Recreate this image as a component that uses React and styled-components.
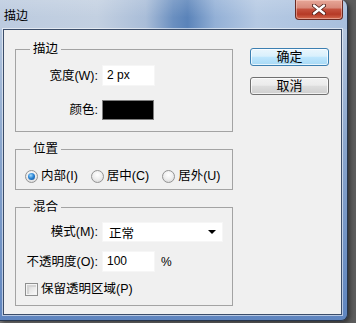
import React from 'react';
import styled, { createGlobalStyle } from 'styled-components';

const Global = createGlobalStyle`
  html, body { margin: 0; padding: 0; }
  body {
    width: 356px; height: 323px; overflow: hidden;
    background: linear-gradient(90deg, #7a7a7a, #5c5c5c);
    font-family: "Liberation Sans", "Noto Sans CJK SC", sans-serif;
    color: #000;
  }
`;

const Window = styled.div`
  width: 348px;
  height: 321px;
  box-sizing: border-box;
  display: flex;
  flex-direction: column;
  border-radius: 0 7px 7px 0;
  border-right: 1px solid #27364d;
  border-bottom: 1px solid #27364d;
  overflow: hidden;
  box-shadow: 2px 2px 4px rgba(0, 0, 0, 0.45);
`;

const TitleBar = styled.div`
  height: 29px;
  flex: none;
  display: flex;
  align-items: flex-start;
  justify-content: space-between;
  background:
    linear-gradient(180deg, rgba(255,255,255,0.15) 0%, rgba(255,255,255,0) 60%),
    linear-gradient(90deg, #bccbdf 0%, #c3d0e1 28%, #a9bdd8 42%, #6a8fc0 50%, #5a83b9 54%, #93b0d6 62%, #b5c9e3 74%, #a8bfdd 100%);
`;

const Title = styled.div`
  font-size: 12px;
  line-height: 14px;
  padding: 9px 0 0 4px;
  color: #000;
`;

const CloseButton = styled.div`
  width: 48px;
  height: 20px;
  margin-right: 4px;
  box-sizing: border-box;
  border: 1px solid #6a2a22;
  border-top: none;
  border-radius: 0 0 4px 4px;
  display: flex;
  align-items: center;
  justify-content: center;
  background: linear-gradient(180deg, #e7a798 0%, #d88a7b 40%, #c4503d 50%, #b63a26 75%, #d46a4f 100%);
  box-shadow: inset 0 0 0 1px rgba(255, 220, 210, 0.45);
`;

const Frame = styled.div`
  flex: 1;
  display: flex;
  padding: 0 5px 5px 3px;
  background: linear-gradient(180deg, #b4c6de 0%, #8aa6cd 40%, #5f85bf 100%);
`;

const Client = styled.div`
  flex: 1;
  display: flex;
  gap: 17px;
  padding: 11px 0 0 11px;
  background: #f0f0f0;
  border: 1px solid #3b4d69;
  box-shadow: 0 0 0 1px rgba(255, 255, 255, 0.55);
`;

const LeftColumn = styled.div`
  width: 218px;
  display: flex;
  flex-direction: column;
  gap: 9px;
`;

const RightColumn = styled.div`
  display: flex;
  flex-direction: column;
  gap: 11px;
  padding-top: 7px;
`;

const Group = styled.fieldset`
  margin: 0;
  padding: 0 0 ${(p) => p.$pb}px 0;
  border: 1px solid #a3a3a3;
  min-width: 0;
`;

const Legend = styled.legend`
  margin-left: 14px;
  padding: 0 3px;
  font-size: 12.5px;
  line-height: 16px;
  height: 16px;
`;

const FormGrid = styled.div`
  display: grid;
  grid-template-columns: 82px auto;
  column-gap: 4px;
  row-gap: ${(p) => p.$gap}px;
  align-items: center;
  padding-top: ${(p) => p.$pt}px;
`;

const Label = styled.div`
  font-size: 12.5px;
  line-height: 16px;
  text-align: right;
  white-space: nowrap;
`;

const TextBox = styled.div`
  width: 53px;
  height: 21px;
  box-sizing: border-box;
  background: #fff;
  border: 1px solid #f6f6f6;
  font-size: 12px;
  line-height: 19px;
  padding-left: 4px;
`;

const Swatch = styled.div`
  width: 52px;
  height: 20px;
  box-sizing: border-box;
  background: #000;
  border: 1px solid #7d7d7d;
`;

const InlineRow = styled.div`
  display: flex;
  align-items: center;
  gap: 6px;
`;

const Unit = styled.span`
  font-size: 12px;
`;

const SelectBox = styled.div`
  width: 121px;
  height: 20px;
  box-sizing: border-box;
  background: #fff;
  border: 1px solid #f6f6f6;
  display: flex;
  align-items: center;
  justify-content: space-between;
  padding: 0 6px 0 6px;
  font-size: 12.5px;
`;

const Arrow = styled.span`
  width: 0;
  height: 0;
  border-left: 4px solid transparent;
  border-right: 4px solid transparent;
  border-top: 4px solid #000;
`;

const RadioRow = styled.div`
  display: flex;
  align-items: center;
  gap: 13px;
  height: 16px;
  padding: 11px 0 5px 9px;
`;

const Option = styled.div`
  display: flex;
  align-items: center;
  gap: 3px;
  font-size: 12.5px;
  line-height: 16px;
  white-space: nowrap;
`;

const Radio = styled.span`
  width: 13px;
  height: 13px;
  box-sizing: border-box;
  border-radius: 50%;
  border: 1px solid #939393;
  background: radial-gradient(circle at 50% 35%, #ffffff 0%, #eeeeee 50%, #d2d2d2 100%);
  display: flex;
  align-items: center;
  justify-content: center;
  &::after {
    content: '';
    width: 7px;
    height: 7px;
    border-radius: 50%;
    background: ${(p) =>
      p.$checked
        ? 'radial-gradient(circle at 40% 35%, #a6dcfb 0%, #2d86d6 45%, #0d4a8f 100%)'
        : 'transparent'};
  }
`;

const CheckRow = styled.div`
  grid-column: 1 / -1;
  display: flex;
  align-items: center;
  gap: 3px;
  padding-left: 9px;
  font-size: 12.5px;
  line-height: 16px;
`;

const Checkbox = styled.span`
  width: 13px;
  height: 13px;
  box-sizing: border-box;
  border: 1px solid #8e8f8f;
  background: #fff;
  box-shadow: inset 0 0 0 1px #f4f4f4, inset 1px 1px 0 2px #d4d4d4;
  background: linear-gradient(135deg, #cfcfcf 0%, #e8e8e8 50%, #fbfbfb 100%);
`;

const Button = styled.div`
  width: 79px;
  height: 18px;
  box-sizing: border-box;
  border-radius: 3px;
  border: 1px solid ${(p) => (p.$primary ? '#3c7fb1' : '#707070')};
  background: ${(p) =>
    p.$primary
      ? 'linear-gradient(180deg, #eaf6fd 0%, #d9f0fc 45%, #bee6fd 52%, #a7d9f5 100%)'
      : 'linear-gradient(180deg, #f2f2f2 0%, #ebebeb 45%, #dddddd 52%, #cfcfcf 100%)'};
  box-shadow: inset 0 0 0 1px rgba(255, 255, 255, 0.7);
  display: flex;
  align-items: center;
  justify-content: center;
  font-size: 13px;
  line-height: 16px;
`;

export default function App() {
  return (
    <>
      <Global />
      <Window>
        <TitleBar>
          <Title>描边</Title>
          <CloseButton>
            <svg width="14" height="11" viewBox="0 0 14 11">
              <path d="M2 1.5 L12 9.5 M12 1.5 L2 9.5" stroke="#4a1a14" strokeWidth="4" strokeLinecap="round" />
              <path d="M2 1.5 L12 9.5 M12 1.5 L2 9.5" stroke="#ffffff" strokeWidth="2.4" strokeLinecap="round" />
            </svg>
          </CloseButton>
        </TitleBar>
        <Frame>
          <Client>
            <LeftColumn>
              <Group $pb={11}>
                <Legend>描边</Legend>
                <FormGrid $pt={8} $gap={14}>
                  <Label>宽度(W):</Label>
                  <TextBox>2 px</TextBox>
                  <Label>颜色:</Label>
                  <Swatch />
                </FormGrid>
              </Group>
              <Group $pb={0}>
                <Legend>位置</Legend>
                <RadioRow>
                  <Option>
                    <Radio $checked />
                    内部(I)
                  </Option>
                  <Option>
                    <Radio />
                    居中(C)
                  </Option>
                  <Option>
                    <Radio />
                    居外(U)
                  </Option>
                </RadioRow>
              </Group>
              <Group $pb={8}>
                <Legend>混合</Legend>
                <FormGrid $pt={7} $gap={9}>
                  <Label>模式(M):</Label>
                  <SelectBox>
                    <span>正常</span>
                    <Arrow />
                  </SelectBox>
                  <Label>不透明度(O):</Label>
                  <InlineRow>
                    <TextBox>100</TextBox>
                    <Unit>%</Unit>
                  </InlineRow>
                  <CheckRow>
                    <Checkbox />
                    保留透明区域(P)
                  </CheckRow>
                </FormGrid>
              </Group>
            </LeftColumn>
            <RightColumn>
              <Button $primary>确定</Button>
              <Button>取消</Button>
            </RightColumn>
          </Client>
        </Frame>
      </Window>
    </>
  );
}
